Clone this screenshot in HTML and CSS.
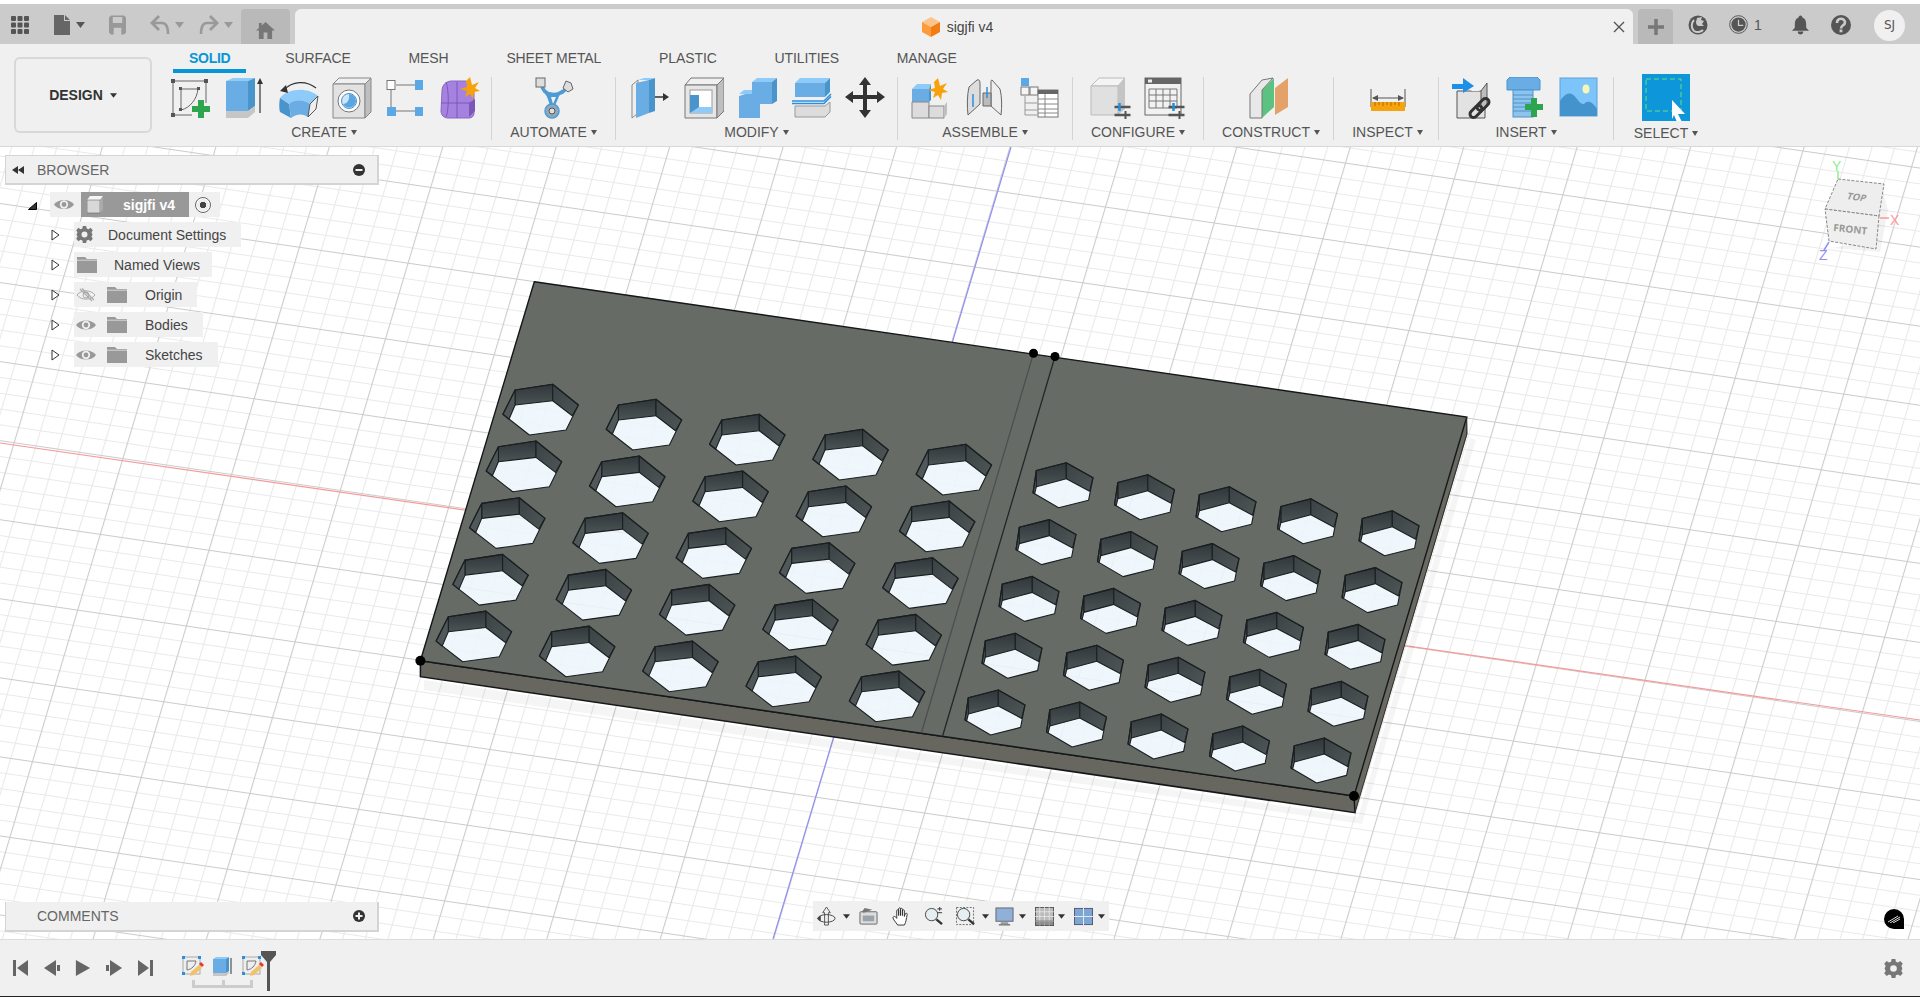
FILE: index.html
```html
<!DOCTYPE html>
<html lang="en">
<head>
<meta charset="utf-8">
<title>sigjfi v4</title>
<link rel="stylesheet" href="styles.css">
</head>
<body>
<svg class="sprite" aria-hidden="true">
  <defs>
    <symbol id="eye" viewBox="0 0 20 14"><path fill="#999" d="M0 7C4 1 16 1 20 7C16 13 4 13 0 7Z"/><circle cx="10" cy="7" r="4.2" fill="#f0f0f0"/><circle cx="10" cy="7" r="2.4" fill="#999"/></symbol>
    <symbol id="eyeoff" viewBox="0 0 20 14"><path fill="none" stroke="#aaa" d="M1 7C5 1.500 15 1.500 19 7C15 12.500 5 12.500 1 7Z"/><circle cx="10" cy="7" r="3" fill="none" stroke="#aaa"/><path stroke="#aaa" stroke-width="1.200" d="M4 1L16 13M6 0.500L18 12"/></symbol>
    <symbol id="folder" viewBox="0 0 20 16"><path fill="#999" d="M0 0H8L10 2H20V16H0Z"/><path stroke="#f0f0f0" stroke-width=".7" d="M0 3.200H20"/></symbol>
    <symbol id="twist" viewBox="0 0 9 12"><path fill="#fff" stroke="#333" stroke-width="1" d="M1 1L8 6L1 11Z"/></symbol>
    <symbol id="caret" viewBox="0 0 9 6"><path fill="#555" d="M0 0H9L4.500 6Z"/></symbol>
    <symbol id="gear" viewBox="0 0 20 20"><path fill="#777" fill-rule="evenodd" d="M8 0H12L12.500 2.800L14.800 3.800L17.100 2.200L19.800 5L18.200 7.300L19.200 9.500V10.500L18.200 12.700L19.800 15L17.100 17.800L14.800 16.200L12.500 17.200L12 20H8L7.500 17.200L5.200 16.200L2.900 17.800L0.200 15L1.800 12.700L0.800 10.500V9.500L1.800 7.300L0.200 5L2.900 2.200L5.200 3.800L7.500 2.800ZM10 6.500A3.500 3.500 0 1 0 10 13.500A3.500 3.500 0 1 0 10 6.500Z"/></symbol>
    <symbol id="sketchmini" viewBox="0 0 22 20"><rect x="1" y="1" width="17" height="17" fill="#eee" stroke="#aaa"/><path fill="none" stroke="#777" d="M5 5H14M5 5V14C10 13 13 10 14 5"/><g fill="#2b8fe0"><rect x="0" y="0" width="3" height="3"/><rect x="16" y="0" width="3" height="3"/><rect x="0" y="16" width="3" height="3"/></g><path fill="#f2c26a" d="M9 16L17 9L20 12L12 19L8 20Z"/><path fill="#e33" d="M17 8L19 6L22 9L20 11Z"/></symbol>
    <symbol id="sliders" viewBox="0 0 16 16"><path stroke="#555" stroke-width="2.500" d="M0 4H16M0 12H16"/><path stroke="#555" stroke-width="2" d="M11 8V16"/><path stroke="#1e90e0" stroke-width="2.500" d="M5 0V8"/></symbol>
    <linearGradient id="wall" x1="0" y1="0" x2="0" y2="1"><stop offset="0" stop-color="#30363a"/><stop offset="1" stop-color="#4c5455"/></linearGradient>
    <linearGradient id="wallside" x1="0" y1="0" x2="1" y2="1"><stop offset="0" stop-color="#3b4245"/><stop offset="1" stop-color="#4e5657"/></linearGradient>
    <pattern id="grid" patternUnits="userSpaceOnUse" width="100" height="100" patternTransform="matrix(1.087 .159 -.226 .7575 1105.100 206.500)">
      <g fill="#e9e9e9">
        <rect x="20" width="1" height="100"/><rect x="40" width="1" height="100"/><rect x="60" width="1" height="100"/><rect x="80" width="1" height="100"/>
        <rect y="20" width="100" height="1.300"/><rect y="40" width="100" height="1.300"/><rect y="60" width="100" height="1.300"/><rect y="80" width="100" height="1.300"/>
      </g>
      <g fill="#cbcbcb"><rect width="1" height="100"/><rect width="100" height="1.300"/></g>
    </pattern>
    <polygon id="hexLcut" points="0,0 37.6,-5.7 63.3,15 51,40 14.3,45 -12.2,24.3"/>
    <polygon id="hexRcut" points="0,0 30,-7.7 56.7,7.3 52.3,29.7 22.3,37.3 -3.3,22.3"/>
    <g id="hexL" stroke="#1a1f21" stroke-width="1.100" stroke-linejoin="round">
      <polygon fill="url(#wall)" points="0,0 37.6,-5.7 37.6,10.7 0,15"/>
      <polygon fill="url(#wallside)" points="37.6,-5.7 63.3,15 57.1,25.7 37.6,10.7"/>
      <polygon fill="#50585a" points="-12.2,24.3 0,0 0,15 -6.1,29.3"/>
      <polygon fill="none" points="0,0 37.6,-5.7 63.3,15 51,40 14.3,45 -12.2,24.3"/>
    </g>
    <g id="hexR" stroke="#1a1f21" stroke-width="1.100" stroke-linejoin="round">
      <polygon fill="url(#wall)" points="0,0 30,-7.7 30,8.300 0,16.300"/>
      <polygon fill="url(#wallside)" points="30,-7.7 56.7,7.3 53.3,20.7 30,8.300"/>
      <polygon fill="#50585a" points="-3.3,22.3 0,0 0,16.300 -1.7,23.3"/>
      <polygon fill="none" points="0,0 30,-7.7 56.7,7.3 52.3,29.7 22.3,37.3 -3.3,22.3"/>
    </g>
    <g id="rowLcut"><use href="#hexLcut"/><use href="#hexLcut" x="103.3" y="15"/><use href="#hexLcut" x="206.6" y="30"/><use href="#hexLcut" x="309.9" y="45"/><use href="#hexLcut" x="413.2" y="60"/></g>
    <g id="rowRcut"><use href="#hexRcut"/><use href="#hexRcut" x="81.5" y="12"/><use href="#hexRcut" x="163" y="24"/><use href="#hexRcut" x="244.5" y="36"/><use href="#hexRcut" x="326" y="48"/></g>
    <g id="rowL"><use href="#hexL"/><use href="#hexL" x="103.3" y="15"/><use href="#hexL" x="206.6" y="30"/><use href="#hexL" x="309.9" y="45"/><use href="#hexL" x="413.2" y="60"/></g>
    <g id="rowR"><use href="#hexR"/><use href="#hexR" x="81.5" y="12"/><use href="#hexR" x="163" y="24"/><use href="#hexR" x="244.5" y="36"/><use href="#hexR" x="326" y="48"/></g>
    <mask id="holes" maskUnits="userSpaceOnUse" x="0" y="147" width="1920" height="792">
      <rect x="0" y="147" width="1920" height="792" fill="#fff"/>
      <g fill="#000">
        <use href="#rowLcut" x="515.1" y="390"/><use href="#rowLcut" x="498.4" y="446.7"/><use href="#rowLcut" x="481.7" y="503.4"/><use href="#rowLcut" x="465" y="560.1"/><use href="#rowLcut" x="448.3" y="616.8"/>
        <use href="#rowRcut" x="1036.3" y="470.5"/><use href="#rowRcut" x="1019.3" y="527.3"/><use href="#rowRcut" x="1002.3" y="584.1"/><use href="#rowRcut" x="985.3" y="640.9"/><use href="#rowRcut" x="968.3" y="697.7"/>
      </g>
    </mask>
  </defs>
</svg>

<header class="topbar">
  <div class="tb-left">
    <svg class="tb-apps" viewBox="0 0 18 18"><g fill="#555"><rect width="5" height="5" rx="1"/><rect x="6.500" width="5" height="5" rx="1"/><rect x="13" width="5" height="5" rx="1"/><rect y="6.500" width="5" height="5" rx="1"/><rect x="6.500" y="6.500" width="5" height="5" rx="1"/><rect x="13" y="6.500" width="5" height="5" rx="1"/><rect y="13" width="5" height="5" rx="1"/><rect x="6.500" y="13" width="5" height="5" rx="1"/><rect x="13" y="13" width="5" height="5" rx="1"/></g></svg>
    <svg class="tb-file" viewBox="0 0 18 20"><path fill="#666" d="M1 0H11V6H17V20H1ZM12 0L17 5H12Z"/></svg>
    <svg class="tb-caret" viewBox="0 0 9 6"><use href="#caret"/></svg>
    <svg class="tb-save" viewBox="0 0 18 20"><path fill="#999" fill-rule="evenodd" d="M2 0H16L18 2V18L16 20H2L0 18V2ZM4 1.500V8H14V1.500ZM5 13V20H13V13Z"/></svg>
    <svg class="tb-undo" viewBox="0 0 20 20"><path fill="none" stroke="#999" stroke-width="2.500" d="M3 8H12C16 8 18 11 18 19"/><path fill="#999" d="M8 0L10 2L4 8L10 14L8 16L0 8Z"/></svg>
    <svg class="tb-caret2" viewBox="0 0 9 6"><path fill="#999" d="M0 0H9L4.500 6Z"/></svg>
    <svg class="tb-redo" viewBox="0 0 20 20"><path fill="none" stroke="#999" stroke-width="2.500" d="M17 8H8C4 8 2 11 2 19"/><path fill="#999" d="M12 0L10 2L16 8L10 14L12 16L20 8Z"/></svg>
    <svg class="tb-caret2" viewBox="0 0 9 6"><path fill="#999" d="M0 0H9L4.500 6Z"/></svg>
  </div>
  <div class="tab-home"><svg class="home-ic" viewBox="0 0 20 18"><path fill="#777" d="M10 0L20 9H17V18H12V11H8V18H3V9H0L3 6.300V1H6V3.600Z"/></svg></div>
  <div class="tab-main">
    <div class="tab-title">
      <svg class="cube-ic" viewBox="0 0 18 20"><polygon fill="#fcc48d" points="9,0 18,5 9,10 0,5"/><polygon fill="#ff9a3a" points="0,5 9,10 9,20 0,15"/><polygon fill="#f07d16" points="18,5 9,10 9,20 18,15"/></svg>
      <span>sigjfi v4</span>
    </div>
    <svg class="tab-close" viewBox="0 0 12 12"><path stroke="#555" stroke-width="1.400" d="M1 1L11 11M11 1L1 11"/></svg>
  </div>
  <div class="tab-plus"><svg class="plus-ic" viewBox="0 0 16 16"><path stroke="#777" stroke-width="3.500" d="M8 0V16M0 8H16"/></svg></div>
  <div class="tb-right">
    <svg class="tb-ext" viewBox="0 0 20 20"><circle cx="10" cy="10" r="9.500" fill="#555"/><path fill="none" stroke="#cbcbcb" stroke-width="2" d="M6 5C3 8 3 13 6 16C9 18 13 17 15 15"/><path fill="#cbcbcb" d="M9 3L14 2L13 5L16 6L14 9L16 11H11C9 11 8 9 8 7Z"/></svg>
    <svg class="tb-clock" viewBox="0 0 20 20"><circle cx="10" cy="10" r="9.300" fill="none" stroke="#555" stroke-width="1"/><circle cx="10" cy="10" r="7.500" fill="#555"/><path fill="none" stroke="#cbcbcb" stroke-width="1.300" d="M10 5V11H15"/></svg>
    <span class="tb-count">1</span>
    <svg class="tb-bell" viewBox="0 0 18 20"><path fill="#555" d="M9 0C10 0 11 1 11 2C14 3 15 6 15 9V13L18 16H0L3 13V9C3 6 4 3 7 2C7 1 8 0 9 0ZM6 17H12C12 19 10.500 20 9 20C7.500 20 6 19 6 17Z"/></svg>
    <svg class="tb-help" viewBox="0 0 20 20"><circle cx="10" cy="10" r="10" fill="#555"/><path fill="none" stroke="#cbcbcb" stroke-width="2.600" d="M6 8C6 2.500 14 2.500 14 7.500C14 10.500 10 10 10 13.500"/><rect x="8.600" y="14.500" width="2.800" height="2.800" fill="#cbcbcb"/></svg>
    <div class="avatar">SJ</div>
  </div>
</header>

<section class="ribbon">
  <div class="design-btn"><span>DESIGN</span><svg class="design-caret" viewBox="0 0 9 6"><path fill="#333" d="M0 0H9L4.500 6Z"/></svg></div>
  <div class="ribbon-main">
    <nav class="tabs">
      <span class="tab tab-active">SOLID</span>
      <span class="tab">SURFACE</span>
      <span class="tab">MESH</span>
      <span class="tab">SHEET METAL</span>
      <span class="tab">PLASTIC</span>
      <span class="tab">UTILITIES</span>
      <span class="tab">MANAGE</span>
    </nav>
    <div class="groups">
      <div class="group g-create">
        <div class="icons">
          <svg class="ic" viewBox="0 0 42 42"><g fill="none" stroke="#666"><path d="M3 4H36V26M3 4V38H22"/><path d="M11 12H28M11 12V33"/><path d="M11 33C20 31 27 22 28 12"/></g><g fill="#555"><rect x="1" y="2" width="4" height="4"/><rect x="34" y="2" width="4" height="4"/><rect x="1" y="36" width="4" height="4"/><rect x="9" y="10" width="3" height="3"/><rect x="27" y="10" width="3" height="3"/><rect x="9" y="31" width="3" height="3"/></g><path fill="#2da44e" d="M28 23H34V29H40V35H34V41H28V35H22V29H28Z"/></svg>
          <svg class="ic" viewBox="0 0 42 42"><polygon fill="#8ecbf9" points="2,4 9,1 31,1 24,4"/><polygon fill="#6aade4" points="2,4 24,4 24,34 2,34"/><polygon fill="#4a94cc" points="24,4 31,1 31,29 24,34"/><polygon fill="#c6c6c6" points="2,34 24,34 31,29 31,35 24,41 2,41"/><path stroke="#333" stroke-width="1.200" d="M36 36V4"/><path fill="#333" d="M36 1L39 7H33Z"/></svg>
          <svg class="ic" viewBox="0 0 42 42"><path fill="#8ecbf9" d="M2 21C10 11 30 10 40 19L32 27C26 22 16 22 11 27Z"/><path fill="#4a94cc" d="M2 21C1 26 1 32 2 35L13 41C12 36 12 31 11 27Z"/><path fill="#6aade4" d="M11 27C16 22 26 22 32 27L30 40C24 36 18 37 13 41C12 36 12 31 11 27Z"/><path fill="#eee" stroke="#555" d="M32 27L40 19L38 32L30 40Z"/><path fill="none" stroke="#333" stroke-width="1.200" d="M6 13C14 4 28 3 38 11"/><path fill="#333" d="M2 14L8 8L10 16Z"/></svg>
          <svg class="ic" viewBox="0 0 42 42"><polygon fill="#f0f0f0" stroke="#888" points="1,7 7,1 39,1 33,7"/><polygon fill="#e2e2e2" stroke="#888" points="1,7 33,7 33,41 1,41"/><polygon fill="#bfbfbf" stroke="#888" points="33,7 39,1 39,35 33,41"/><circle cx="17" cy="24" r="11" fill="#fff" stroke="#777"/><circle cx="17" cy="24" r="7.500" fill="#cfe6f8" stroke="#4a94cc"/><path fill="#5aa6e0" d="M17 17A7 7 0 0 1 24 24A7 7 0 0 1 11 27C15 27 18 23 17 17Z"/></svg>
          <svg class="ic" viewBox="0 0 42 42"><path stroke="#777" d="M10 8H29M5 13V30M10 34H29"/><rect x="1" y="3.500" width="8" height="9" fill="#fff" stroke="#777"/><rect x="29" y="3" width="8" height="10" fill="#5aa9e6"/><rect x="1" y="30" width="9" height="9" fill="#5aa9e6"/><rect x="29" y="30" width="8" height="9" fill="#5aa9e6"/></svg>
          <svg class="ic" viewBox="0 0 42 42"><path fill="#a682e0" stroke="#8a66c8" d="M2 14C2 8 6 4 12 4H26L34 14V36C34 39 32 41 29 41H8C4 41 1 38 1 34Z"/><path fill="none" stroke="#7b58b8" d="M1 26H33M17 5V41M6 5C9 12 9 34 6 40"/><path fill="#7b58b8" d="M29 26L35 22V34L29 40Z"/><path fill="#f7a10c" d="M30 0L32 8L39 5L35 11L40 14L34 15L33 22L30 17L25 20L27 14L20 12L27 10L26 4Z"/></svg>
        </div>
        <div class="glabel">CREATE<i class="tri"></i></div>
      </div>
      <div class="group g-automate">
        <div class="icons">
          <svg class="ic" viewBox="0 0 42 42"><path fill="none" stroke="#4d9bd5" stroke-width="3.500" d="M9 10C12 17 17 15 19 28C21 15 27 18 33 12M11 14C16 18 25 19 31 14"/><path fill="#4d9bd5" d="M13 17H27L21 31H18Z"/><path fill="#f0f0f0" d="M18 20H23L20 27Z"/><rect x="3" y="1" width="9" height="9" fill="#ddd" stroke="#666"/><polygon fill="#ddd" stroke="#666" points="33,4 38,6 40,12 35,15 30,11"/><circle cx="19" cy="34" r="7" fill="#8fa8bb" stroke="#4d9bd5" stroke-width="1.500"/><circle cx="19" cy="34" r="3" fill="#ddd" stroke="#555"/></svg>
        </div>
        <div class="glabel">AUTOMATE<i class="tri"></i></div>
      </div>
      <div class="group g-modify">
        <div class="icons">
          <svg class="ic" viewBox="0 0 42 42"><polygon fill="#eee" stroke="#888" points="4,8 10,3 10,36 4,41"/><polygon fill="#8ecbf9" points="10,3 16,1 26,1 21,3"/><polygon fill="#6aade4" points="8,6 21,3 21,36 8,41"/><polygon fill="#4a94cc" points="21,3 27,1 27,34 21,36"/><path stroke="#333" stroke-width="1.500" d="M27 20H37"/><path fill="#333" d="M41 20L35 16V24Z"/></svg>
          <svg class="ic" viewBox="0 0 42 42"><polygon fill="#f0f0f0" stroke="#777" points="3,8 9,1 43,1 35,8"/><polygon fill="#e6e6e6" stroke="#777" points="3,8 35,8 35,41 3,41"/><polygon fill="#bfbfbf" stroke="#777" points="35,8 42,1 42,34 35,41"/><rect x="8" y="13" width="22" height="23" fill="#fff" stroke="#999"/><path fill="#4a94cc" d="M8 18H17V30H24L8 36Z"/><polygon fill="#8ecbf9" points="8,36 17,30 30,30 30,36"/></svg>
          <svg class="ic" viewBox="0 0 42 42"><polygon fill="#8ecbf9" points="16,5 21,1 41,1 36,5"/><polygon fill="#6aade4" points="16,5 36,5 36,27 24,27 24,41 3,41 3,19 16,15"/><polygon fill="#8ecbf9" points="3,17 8,13 16,13 16,17"/><polygon fill="#4a94cc" points="36,5 41,1 41,24 36,27"/></svg>
          <svg class="ic" viewBox="0 0 42 42"><polygon fill="#8ecbf9" points="5,6 10,1 40,1 35,6"/><polygon fill="#6aade4" points="5,6 35,6 35,20 5,20"/><polygon fill="#4a94cc" points="35,6 40,1 40,15 35,20"/><path fill="none" stroke="#2b8fe0" stroke-width="1.500" d="M2 24H34L41 17"/><path fill="none" stroke="#2b8fe0" stroke-width="1.500" d="M2 26.500H34L41 19.500"/><polygon fill="#dcdcdc" stroke="#999" points="5,29 35,29 40,25 40,35 35,40 5,40"/></svg>
          <svg class="ic" viewBox="0 0 42 42"><path fill="#333" d="M21 0L27 8H23V18H33V14L41 20L33 26V22H23V33H27L21 41L15 33H19V22H9V26L1 20L9 14V18H19V8H15Z"/></svg>
        </div>
        <div class="glabel">MODIFY<i class="tri"></i></div>
      </div>
      <div class="group g-assemble">
        <div class="icons">
          <svg class="ic" viewBox="0 0 42 42"><polygon fill="#8ecbf9" points="2,12 7,7 21,7 19,12"/><polygon fill="#6aade4" points="2,12 19,12 19,25 2,25"/><polygon fill="#4a94cc" points="19,12 21,7 21,23 19,25"/><polygon fill="#dcdcdc" stroke="#888" points="2,25 19,25 19,41 2,41"/><polygon fill="#dcdcdc" stroke="#888" points="19,29 34,29 34,41 19,41"/><polygon fill="#bfbfbf" points="34,29 37,25 37,37 34,41"/><path fill="#f7a10c" d="M28 1L30 9L37 6L33 12L38 15L32 16L31 23L28 18L23 21L25 15L18 13L25 11L24 5Z"/></svg>
          <svg class="ic" viewBox="0 0 42 42"><path fill="#ddd" stroke="#666" d="M5 10L13 3C16 2 16 5 16 8V27L4 38C3 30 3 18 5 10Z"/><path fill="#eee" stroke="#666" d="M28 3L36 12C38 20 38 30 37 38L27 29V6C27 4 27 3 28 3Z"/><path fill="#bbb" stroke="#666" d="M19 16H27V29H19Z"/><path stroke="#2b8fe0" stroke-width="1.500" d="M9 17V30M23 10V21"/></svg>
          <svg class="ic" viewBox="0 0 42 42"><rect x="3" y="1" width="8" height="8" fill="#5aa9e6"/><rect x="3" y="10" width="8" height="8" fill="#f5f5f5" stroke="#777"/><rect x="12" y="10" width="8" height="8" fill="#f5f5f5" stroke="#777"/><path stroke="#999" fill="none" d="M7 19V38H19M7 26H19M7 33H19"/><rect x="20" y="13" width="20" height="27" fill="#fff" stroke="#777"/><rect x="20" y="13" width="20" height="4" fill="#666"/><path stroke="#888" d="M20 22H40M20 27H40M20 32H40M20 36H40M27 17V40"/></svg>
        </div>
        <div class="glabel">ASSEMBLE<i class="tri"></i></div>
      </div>
      <div class="group g-configure">
        <div class="icons">
          <svg class="ic" viewBox="0 0 42 42"><polygon fill="#f4f4f4" stroke="#bbb" points="1,9 9,1 35,1 28,9"/><polygon fill="#e0e0e0" stroke="#bbb" points="1,9 28,9 28,38 1,38"/><polygon fill="#c4c4c4" points="28,9 35,1 35,32 28,38"/><svg x="24" y="26" width="17" height="16"><use href="#sliders"/></svg></svg>
          <svg class="ic" viewBox="0 0 42 42"><rect x="1" y="1" width="36" height="37" fill="#f2f2f2" stroke="#666"/><rect x="1" y="1" width="36" height="6" fill="#666"/><rect x="4" y="2.500" width="4" height="3" fill="#eee"/><path fill="none" stroke="#777" d="M5 12H33V31H5ZM5 18H33M5 24H33M12 12V31M19 12V31M26 12V31"/><svg x="24" y="26" width="17" height="16"><use href="#sliders"/></svg></svg>
        </div>
        <div class="glabel">CONFIGURE<i class="tri"></i></div>
      </div>
      <div class="group g-construct">
        <div class="icons">
          <svg class="ic" viewBox="0 0 42 42"><polygon fill="#e4a26a" points="27,11 40,1 40,30 27,38"/><polygon fill="#5cc282" points="14,13 26,1 26,30 14,41"/><polygon fill="#e8e8e8" stroke="#777" points="2,17 14,3 25,1 14,13 14,41 2,41"/></svg>
        </div>
        <div class="glabel">CONSTRUCT<i class="tri"></i></div>
      </div>
      <div class="group g-inspect">
        <div class="icons">
          <svg class="ic" viewBox="0 0 42 42"><path stroke="#555" d="M4 12V30M38 12V30M6 21H36"/><path fill="#555" d="M5 21L11 18V24ZM37 21L31 18V24Z"/><rect x="4" y="25" width="34" height="9" fill="#f5a40f"/><path stroke="#a86f06" d="M8 25V29M12 25V28M16 25V29M20 25V28M24 25V29M28 25V28M32 25V29"/></svg>
        </div>
        <div class="glabel">INSPECT<i class="tri"></i></div>
      </div>
      <div class="group g-insert">
        <div class="icons">
          <svg class="ic" viewBox="0 0 42 42"><polygon fill="#e2e2e2" stroke="#555" points="6,14 34,14 34,41 6,41"/><polygon fill="#f2f2f2" points="20,14 26,6 36,6 28,14"/><polygon fill="#bdbdbd" stroke="#555" points="30,14 36,6 36,30 30,36"/><path fill="#1e8fe6" d="M1 7H12V1L23 9L12 16V12H1Z"/><g fill="none" stroke="#333" stroke-width="3"><rect x="18" y="31" width="14" height="7" rx="3.500" transform="rotate(-45 25 34.500)"/><rect x="25" y="24" width="14" height="7" rx="3.500" transform="rotate(-45 32 27.500)"/></g></svg>
          <svg class="ic" viewBox="0 0 42 42"><path fill="#6aade4" stroke="#4a94cc" d="M5 0H32L35 3V13H2V3Z"/><rect x="8" y="13" width="20" height="27" fill="#8ec3ec" stroke="#4a94cc"/><path stroke="#4a94cc" d="M8 18H28M8 22H28M8 26H28M8 30H28M8 34H28"/><path fill="#2da44e" d="M26 21H32V27H38V33H32V40H26V33H20V27H26Z"/></svg>
          <svg class="ic" viewBox="0 0 42 42"><rect x="1" y="1" width="37" height="38" fill="#7cc4f9" stroke="#5aa1d8"/><path fill="#4593cc" d="M1 39V24C7 15 12 14 18 22C20 25 22 27 25 27C28 24 32 23 38 32V39Z"/><ellipse cx="27" cy="12" rx="3.500" ry="4.500" fill="#f8f5b8"/></svg>
        </div>
        <div class="glabel">INSERT<i class="tri"></i></div>
      </div>
      <div class="group g-select">
        <div class="select-btn">
          <svg class="select-ic" viewBox="0 0 48 47"><rect width="48" height="47" fill="#0d96da"/><rect x="4" y="5" width="35" height="32" fill="none" stroke="#6fe07a" stroke-dasharray="5 3"/><path fill="#fff" d="M30 26L43 40H36L40 48H35L32 41L30 45Z"/></svg>
        </div>
        <div class="glabel">SELECT<i class="tri"></i></div>
      </div>
    </div>
  </div>
</section>

<main class="viewport">
  <svg class="scene" viewBox="0 147 1920 792" role="img" aria-label="3D model">
    <rect x="0" y="147" width="1920" height="792" fill="#fff"/>
    <rect x="0" y="147" width="1920" height="792" fill="url(#grid)"/>
    <path stroke="#f59a9a" stroke-width="1.200" d="M0 443L1920 720"/>
    <path stroke="#8f8ff5" stroke-width="1.200" d="M1011 147L773 939"/>
    <polygon fill="#000" opacity=".04" points="424,680 1358,817 1470,438 1476,440 1362,824 424,690"/>
    <polygon fill="#eef6fc" opacity=".86" points="534.3,281.7 1466.8,417 1354,796 420.4,660.7"/>
    <polygon fill="#6b6a62" points="1466.8,417 1467.5,434 1355,812.7 1354,796"/>
    <polygon fill="#67665f" stroke="#15181a" stroke-width="1.500" points="420.400,660.700 1354,796 1355,812.700 420.400,676.700"/>
    <polygon fill="#676b65" mask="url(#holes)" points="534.3,281.7 1466.8,417 1354,796 420.4,660.7"/>
    <g>
      <use href="#rowL" x="515.1" y="390"/><use href="#rowL" x="498.4" y="446.7"/><use href="#rowL" x="481.7" y="503.4"/><use href="#rowL" x="465" y="560.1"/><use href="#rowL" x="448.3" y="616.8"/>
      <use href="#rowR" x="1036.3" y="470.5"/><use href="#rowR" x="1019.3" y="527.3"/><use href="#rowR" x="1002.3" y="584.1"/><use href="#rowR" x="985.3" y="640.9"/><use href="#rowR" x="968.3" y="697.7"/>
    </g>
    <path fill="none" stroke="#15181a" stroke-width="1.400" d="M534.3 281.7L1466.8 417L1354 796L420.4 660.7Z"/>
    <path stroke="#4a5052" stroke-width="1.300" d="M1033.500 353.300L921.700 731.700"/>
    <path stroke="#22272a" stroke-width="1.300" d="M1055 356.500L942.700 735.700"/>
    <path fill="none" stroke="#2e302c" stroke-width="1" d="M1466.800 417V434L1355 812.700"/>
    <g fill="#000"><circle cx="1033.500" cy="353.300" r="4.500"/><circle cx="1055" cy="356.500" r="4.500"/><circle cx="420.400" cy="660.700" r="5"/><circle cx="1354" cy="796" r="5"/></g>
  </svg>

  <aside class="panel panel-browser">
    <div class="panel-head">
      <svg class="rewind" viewBox="0 0 12 8"><path fill="#333" d="M6 0V8L0 4ZM12 0V8L6 4Z"/></svg>
      <span class="panel-title">BROWSER</span>
      <svg class="panel-btn" viewBox="0 0 12 12"><circle cx="6" cy="6" r="6" fill="#333"/><rect x="2.500" y="5" width="7" height="2" fill="#f0f0f0"/></svg>
    </div>
    <ul class="tree">
      <li class="tree-row tree-root">
        <svg class="root-twist" viewBox="0 0 9 8"><path fill="#333" stroke="#000" d="M0.500 7.500L8.500 0.500V7.500Z"/></svg>
        <div class="node node-root">
          <svg class="eye"><use href="#eye"/></svg>
          <div class="root-box">
            <svg class="root-cube" viewBox="0 0 16 18"><polygon fill="#f5f5f5" points="0,4 3,0 16,0 13,4"/><polygon fill="#d8d8d8" stroke="#666" stroke-width=".6" points="0,4 13,4 13,17 0,17"/><polygon fill="#aaa" points="13,4 16,0 16,14 13,17"/></svg>
            <span class="root-name">sigjfi v4</span>
          </div>
          <div class="radio-wrap"><span class="radio"></span></div>
        </div>
      </li>
      <li class="tree-row">
        <svg class="twist"><use href="#twist"/></svg>
        <div class="node node-doc"><svg class="gear"><use href="#gear"/></svg><span>Document Settings</span></div>
      </li>
      <li class="tree-row">
        <svg class="twist"><use href="#twist"/></svg>
        <div class="node node-views"><svg class="folder"><use href="#folder"/></svg><span>Named Views</span></div>
      </li>
      <li class="tree-row">
        <svg class="twist"><use href="#twist"/></svg>
        <div class="node node-std"><svg class="eye"><use href="#eyeoff"/></svg><svg class="folder"><use href="#folder"/></svg><span>Origin</span></div>
      </li>
      <li class="tree-row">
        <svg class="twist"><use href="#twist"/></svg>
        <div class="node node-std"><svg class="eye"><use href="#eye"/></svg><svg class="folder"><use href="#folder"/></svg><span>Bodies</span></div>
      </li>
      <li class="tree-row">
        <svg class="twist"><use href="#twist"/></svg>
        <div class="node node-std"><svg class="eye"><use href="#eye"/></svg><svg class="folder"><use href="#folder"/></svg><span>Sketches</span></div>
      </li>
    </ul>
  </aside>

  <aside class="panel panel-comments">
    <div class="panel-head">
      <span class="panel-title panel-title-c">COMMENTS</span>
      <svg class="panel-btn" viewBox="0 0 12 12"><circle cx="6" cy="6" r="6" fill="#333"/><path stroke="#f0f0f0" stroke-width="2" d="M2.500 6H9.500M6 2.500V9.500"/></svg>
    </div>
  </aside>

  <svg class="navcube" viewBox="0 0 140 130">
    <polygon fill="#000" opacity=".05" points="52,108 100,112 108,70 100,40 95,100"/>
    <polygon fill="#eeeeef" stroke="#888" stroke-dasharray="3 1.500" points="58,39 104,44 99,76 45,69"/>
    <polygon fill="#efefef" stroke="#888" stroke-dasharray="3 1.500" points="45,69 99,76 96,109 49,101"/>
    <path stroke="#8fef8f" stroke-width="1.500" d="M58 39V31"/>
    <path stroke="#f79a9a" stroke-width="1.500" d="M100 78H109"/>
    <path stroke="#8f8ff5" stroke-width="1.500" d="M49 102L44 110"/>
    <text class="cube-top" transform="translate(66 59) rotate(8) skewX(-14)">TOP</text>
    <text class="cube-front" transform="translate(53 91) rotate(6)">FRONT</text>
    <text class="axis axis-y" x="52" y="31">Y</text>
    <text class="axis axis-x" x="110" y="85">X</text>
    <text class="axis axis-z" x="39" y="120">Z</text>
  </svg>

  <div class="navbar">
    <svg class="nv nv-orbit" viewBox="0 0 20 20"><path fill="#eee" stroke="#444" stroke-width=".9" d="M10 0L14 6H12V19H8V6H6Z"/><ellipse cx="10" cy="12" rx="9" ry="4" fill="none" stroke="#444"/><path fill="#444" d="M0 12L4 9V15Z"/></svg>
    <svg class="nv-c" viewBox="0 0 9 6"><path fill="#333" d="M0 0H9L4.500 6Z"/></svg>
    <svg class="nv nv-cam" viewBox="0 0 20 20"><rect x="1" y="5" width="18" height="13" rx="1" fill="#ddd" stroke="#666"/><rect x="4" y="9" width="12" height="6" fill="#99a3ad"/><path fill="#777" d="M3 5L6 1L14 3L5 6Z"/></svg>
    <svg class="nv nv-hand" viewBox="0 0 20 20"><path fill="#fff" stroke="#333" d="M6 19C4 16 1 13 1 11C2 9 4 10 5 12V4C5 2.500 7 2.500 7 4V9V2C7 .500 9 .500 9 2V9V2.500C9 1 11 1 11 2.500V9V4C11 2.500 13 2.500 13 4V10L14 7C15 6 16 6.500 16 8C15 12 15 16 13 19Z"/></svg>
    <svg class="nv nv-zoom" viewBox="0 0 20 20"><circle cx="8" cy="8" r="6.500" fill="#e4eef3" stroke="#444"/><path stroke="#333" stroke-width="2.500" d="M13 13L19 18"/><path stroke="#333" d="M14 2H19M16.500 0V4M14 6H19"/></svg>
    <svg class="nv nv-fit" viewBox="0 0 20 20"><rect x=".5" y=".5" width="18" height="18" fill="none" stroke="#666" stroke-dasharray="2 1.500"/><circle cx="8" cy="8" r="6.500" fill="#e4eef3" stroke="#444"/><path stroke="#333" stroke-width="2.500" d="M13 13L19 18"/></svg>
    <svg class="nv-c nv-c2" viewBox="0 0 9 6"><path fill="#333" d="M0 0H9L4.500 6Z"/></svg>
    <svg class="nv nv-mon" viewBox="0 0 20 20"><rect x="1" y="1" width="18" height="14" fill="#8fb0d8" stroke="#666"/><rect x="6" y="16" width="8" height="2" fill="#999"/><rect x="4" y="18" width="12" height="1.500" fill="#777"/></svg>
    <svg class="nv-c" viewBox="0 0 9 6"><path fill="#333" d="M0 0H9L4.500 6Z"/></svg>
    <svg class="nv nv-grid" viewBox="0 0 20 20"><rect x=".5" y=".5" width="19" height="19" fill="#bbb" stroke="#555"/><path stroke="#f0f0f0" stroke-width=".7" d="M5 0V20M10 0V20M15 0V20M0 5H20M0 10H20M0 15H20"/><rect y="14" width="20" height="6" fill="#555" opacity=".45"/></svg>
    <svg class="nv-c" viewBox="0 0 9 6"><path fill="#333" d="M0 0H9L4.500 6Z"/></svg>
    <svg class="nv nv-view" viewBox="0 0 20 20"><rect x=".5" y="1.500" width="19" height="17" fill="#7ea6d2" stroke="#557"/><path stroke="#e6eef6" d="M10 1V19M0 10H20"/></svg>
    <svg class="nv-c" viewBox="0 0 9 6"><path fill="#333" d="M0 0H9L4.500 6Z"/></svg>
  </div>

  <div class="badge"><svg class="badge-ic" viewBox="0 0 12 8"><path stroke="#ddd" d="M0 7L10 1M2 8L12 2M5 8L12 4"/></svg></div>
</main>

<footer class="timeline">
  <div class="tl-controls">
    <svg class="tl-btn" viewBox="0 0 16 16"><path fill="#666" d="M0 0H3V16H0ZM15 0V16L4 8Z"/></svg>
    <svg class="tl-btn" viewBox="0 0 16 16"><path fill="#666" d="M12 0V16L0 8ZM13 5H16V11H13Z"/></svg>
    <svg class="tl-btn" viewBox="0 0 16 18"><path fill="#666" d="M0 0L16 9L0 18Z"/></svg>
    <svg class="tl-btn" viewBox="0 0 16 16"><path fill="#666" d="M4 0V16L16 8ZM0 5H3V11H0Z"/></svg>
    <svg class="tl-btn" viewBox="0 0 16 16"><path fill="#666" d="M13 0H16V16H13ZM1 0V16L12 8Z"/></svg>
  </div>
  <div class="tl-steps">
    <div class="tl-icons">
      <svg class="tl-step"><use href="#sketchmini"/></svg>
      <svg class="tl-step" viewBox="0 0 22 20"><polygon fill="#8ecbf9" points="1,3 4,1 17,1 14,3"/><polygon fill="#6aade4" points="1,3 14,3 14,17 1,17"/><polygon fill="#4a94cc" points="14,3 17,1 17,15 14,17"/><polygon fill="#c6c6c6" points="1,17 14,17 17,15 17,17 14,20 1,20"/><path stroke="#333" d="M19 18V2"/></svg>
      <svg class="tl-step"><use href="#sketchmini"/></svg>
    </div>
    <div class="tl-bracket"><i></i></div>
  </div>
  <svg class="tl-marker" viewBox="0 0 15 40"><path fill="#555" d="M0 0H15V4L9 11V40H6V11L0 4Z"/></svg>
  <svg class="tl-gear"><use href="#gear"/></svg>
</footer>
</body>
</html>
```
FILE: styles.css
```css
* { box-sizing: border-box; }
html, body { margin: 0; padding: 0; }
body {
  width: 1920px;
  height: 997px;
  overflow: hidden;
  background: #fff;
  font-family: "Liberation Sans", Arial, sans-serif;
  font-size: 14px;
  color: #555;
  display: flex;
  flex-direction: column;
  padding-top: 4px;
  border-bottom: 1px solid #222;
}
.sprite { position: absolute; width: 0; height: 0; }
svg { display: block; flex: none; }

/* top bar */
.topbar {
  height: 40px;
  flex: none;
  background: #cbcbcb;
  display: flex;
  padding-top: 5px;
  align-items: stretch;
}
.tb-left { width: 241px; display: flex; align-items: center; padding: 0 0 4px 11px; }
.tb-apps { width: 18px; height: 18px; }
.tb-file { width: 18px; height: 20px; margin-left: 24px; }
.tb-caret { width: 9px; height: 6px; margin-left: 5px; }
.tb-save { width: 17px; height: 20px; margin-left: 24px; }
.tb-undo { width: 20px; height: 20px; margin-left: 24px; }
.tb-redo { width: 20px; height: 20px; margin-left: 15px; }
.tb-caret2 { width: 9px; height: 6px; margin-left: 5px; }
.tab-home {
  width: 49px;
  background: #b9b9b9;
  border-radius: 4px 4px 0 0;
  display: flex;
  align-items: center;
  justify-content: center;
  padding-top: 7px;
}
.home-ic { width: 19px; height: 17px; }
.tab-main {
  flex: 1;
  margin-left: 5px;
  background: #f0f0f0;
  border-radius: 6px 6px 0 0;
  display: flex;
  align-items: center;
}
.tab-title {
  flex: 1;
  display: flex;
  align-items: center;
  justify-content: center;
  gap: 7px;
  padding-left: 14px;
  font-size: 14px;
  color: #444;
}
.cube-ic { width: 18px; height: 20px; }
.tab-close { width: 12px; height: 12px; margin: 0 8px 0 7px; }
.tab-plus {
  width: 35px;
  margin-left: 5px;
  background: #b9b9b9;
  border-radius: 4px 4px 0 0;
  display: flex;
  align-items: center;
  justify-content: center;
}
.plus-ic { width: 16px; height: 16px; }
.tb-right { width: 247px; display: flex; align-items: center; padding: 0 0 4px 15px; color: #555; }
.tb-ext { width: 20px; height: 20px; }
.tb-clock { width: 19px; height: 19px; margin-left: 21px; }
.tb-count { margin-left: 6px; width: 9px; font-size: 14px; }
.tb-bell { width: 17px; height: 20px; margin-left: 29px; }
.tb-help { width: 20px; height: 20px; margin-left: 22px; }
.avatar {
  width: 31px;
  height: 31px;
  margin-left: 23px;
  margin-top: 1px;
  border-radius: 50%;
  background: #f0f0f0;
  font-family: "DejaVu Sans", sans-serif;
  font-size: 12px;
  color: #555;
  display: flex;
  align-items: center;
  justify-content: center;
}

/* ribbon */
.ribbon {
  height: 103px;
  flex: none;
  background: #f0f0f0;
  border-bottom: 1px solid #d8d8d8;
  display: flex;
  padding-left: 14px;
}
.design-btn {
  width: 138px;
  height: 76px;
  margin-top: 13px;
  border: 2px solid #d8d8d8;
  border-radius: 6px;
  display: flex;
  align-items: center;
  justify-content: center;
  gap: 7px;
  font-weight: 700;
  color: #333;
}
.design-caret { width: 7px; height: 5px; margin-top: 1px; }
.ribbon-main { margin-left: 8px; display: flex; flex-direction: column; }
.tabs { display: flex; height: 30px; }
.tab { padding: 6px 29px 0 28.8px; line-height: 16px; color: #555; white-space: nowrap; letter-spacing: -.1px; }
.tab-active {
  margin: 0 13px;
  padding: 6px 16px 0;
  height: 29px;
  color: #0696d7;
  font-weight: 700;
  border-bottom: 4px solid #0696d7;
  letter-spacing: -.3px;
}
.tab-active + .tab { padding-left: 26px; }
.groups { display: flex; margin-top: 3px; }
.group {
  height: 63px;
  display: flex;
  flex-direction: column;
  align-items: center;
  border-right: 1px solid #d4d4d4;
}
.g-create { width: 332px; padding-right: 3px; }
.g-create .icons { margin-left: 3px; }
.g-automate { width: 124px; }
.g-modify { width: 282px; }
.g-assemble { width: 175px; }
.g-configure { width: 131px; }
.g-construct { width: 130px; padding-left: 5px; }
.g-construct .icons { margin-right: 5px; }
.g-inspect { width: 105px; padding-left: 3px; }
.g-insert { width: 175px; }
.g-select { width: 104px; border-right: 0; }
.icons { display: flex; gap: 12px; height: 50px; }
.ic { width: 42px; height: 42px; }
.glabel {
  line-height: 16px;
  color: #555;
  display: flex;
  align-items: center;
  gap: 4px;
  white-space: nowrap;
}
.tri {
  width: 0;
  height: 0;
  border-left: 3.5px solid transparent;
  border-right: 3.5px solid transparent;
  border-top: 5px solid #555;
}
.select-btn { height: 48px; margin-top: -3px; }
.select-ic { width: 48px; height: 47px; margin-bottom: 4px; }
.g-select .glabel { margin-top: 3px; }

/* viewport */
.viewport { position: relative; flex: 1; min-height: 0; overflow: hidden; }
.scene { width: 1920px; height: 792px; }

.panel { position: absolute; left: 5px; width: 374px; font-size: 14px; color: #666; }
.panel-browser { top: 8px; }
.panel-comments { top: 755px; }
.panel-head {
  height: 30px;
  background: #f0f0f0;
  border: 1px solid #d4d4d4;
  border-width: 1px 2px 2px 1px;
  display: flex;
  align-items: center;
  padding: 0 12px 0 6px;
}
.panel-comments .panel-head { border-top: 0; }
.rewind { width: 12px; height: 8px; }
.panel-title { margin-left: 13px; flex: 1; }
.panel-title-c { margin-left: 25px; }
.panel-btn { width: 12px; height: 12px; }

.tree { list-style: none; margin: 7px 0 0; padding: 0; color: #444; }
.tree-row {
  height: 25px;
  margin-bottom: 5px;
  display: flex;
  align-items: center;
  padding-left: 46px;
}
.twist { width: 9px; height: 12px; }
.node { height: 25px; margin-left: 14px; background: #f0f0f0; display: flex; align-items: center; white-space: nowrap; }
.tree-root { padding-left: 23px; }
.root-twist { width: 9px; height: 8px; margin-top: 2px; }
.node-root { margin-left: 13px; background: none; }
.node-root > .eye { margin-left: 0; box-sizing: content-box; padding: 5.500px 7px 5.500px 4px; background: #f0f0f0; }
.eye { width: 20px; height: 14px; }
.root-box {
  width: 108px;
  height: 25px;
  background: #999;
  display: flex;
  align-items: center;
  font-weight: 700;
  color: #fff;
}
.root-cube { width: 16px; height: 18px; margin-left: 6px; }
.root-name { margin-left: 20px; padding-left: 0; }
.radio-wrap { width: 31px; height: 25px; background: #f0f0f0; display: flex; align-items: center; justify-content: center; }
.radio {
  width: 16px;
  height: 16px;
  margin-left: -3px;
  border-radius: 50%;
  background: radial-gradient(circle, #444 0 3px, #eee 3.500px 6px, #fff 6px);
  border: 1px solid #666;
}
.gear { width: 17px; height: 17px; }
.node-doc { padding: 0 15px 0 2px; }
.node-doc span { margin-left: 15px; }
.folder { width: 20px; height: 16px; }
.node-views { padding: 0 12px 0 3px; }
.node-views span { margin-left: 17px; }
.node-std { padding: 0 15px 0 2px; }
.node-std .folder { margin-left: 11px; }
.node-std span { margin-left: 18px; }

.navcube { position: absolute; right: 0; top: -7px; width: 140px; height: 130px; }
.cube-top, .cube-front { font-family: "Open Sans", "Liberation Sans", sans-serif; font-weight: 700; fill: #999; }
.cube-top { font-size: 9.5px; }
.cube-front { font-size: 10px; }
.axis { font-family: "Liberation Sans", sans-serif; font-size: 14px; }
.axis-y { fill: #8fef8f; }
.axis-x { fill: #f79a9a; }
.axis-z { fill: #8f8ff5; }

.navbar {
  position: absolute;
  left: 813px;
  top: 754px;
  width: 296px;
  height: 30px;
  background: #f0f0f0;
  display: flex;
  align-items: center;
  padding-left: 4px;
}
.nv { width: 19px; height: 19px; }
.nv-c { width: 7px; height: 5px; }
.nv-orbit + .nv-c { margin-left: 7px; }
.nv-cam { margin-left: 9px; }
.nv-hand { margin-left: 14px; }
.nv-zoom { margin-left: 13px; }
.nv-fit { margin-left: 13px; }
.nv-c2 { margin-left: 7px; }
.nv-mon { margin-left: 6px; }
.nv-mon + .nv-c { margin-left: 5px; }
.nv-grid { margin-left: 9px; }
.nv-grid + .nv-c { margin-left: 4px; }
.nv-view { margin-left: 9px; }
.nv-view + .nv-c { margin-left: 5px; }

.badge {
  position: absolute;
  left: 1884px;
  top: 762px;
  width: 20px;
  height: 20px;
  background: #000;
  border-radius: 50% 50% 0 50%;
  display: flex;
  align-items: center;
  justify-content: center;
}
.badge-ic { width: 12px; height: 8px; }

/* timeline */
.timeline {
  flex: none;
  height: 57px;
  background: #f0f0f0;
  border-top: 1px solid #dcdcdc;
  display: flex;
  align-items: center;
  padding-left: 13px;
}
.tl-controls { display: flex; gap: 15px; align-items: center; }
.tl-btn { width: 16px; height: 16px; }
.tl-steps { margin-left: 29px; display: flex; flex-direction: column; align-items: flex-start; margin-top: 7px; }
.tl-icons { display: flex; gap: 8px; }
.tl-step { width: 22px; height: 20px; }
.tl-bracket {
  position: relative;
  width: 61px;
  height: 8px;
  margin: 4px 0 0 10px;
  border: 3px solid #ccc;
  border-top: 0;
}
.tl-bracket i { position: absolute; left: 27px; top: 0; width: 3px; height: 5px; background: #ccc; }
.tl-marker { width: 15px; height: 40px; margin-left: -3px; margin-top: 6px; }
.tl-gear { width: 19px; height: 19px; margin-left: auto; margin-right: 17px; }
```
